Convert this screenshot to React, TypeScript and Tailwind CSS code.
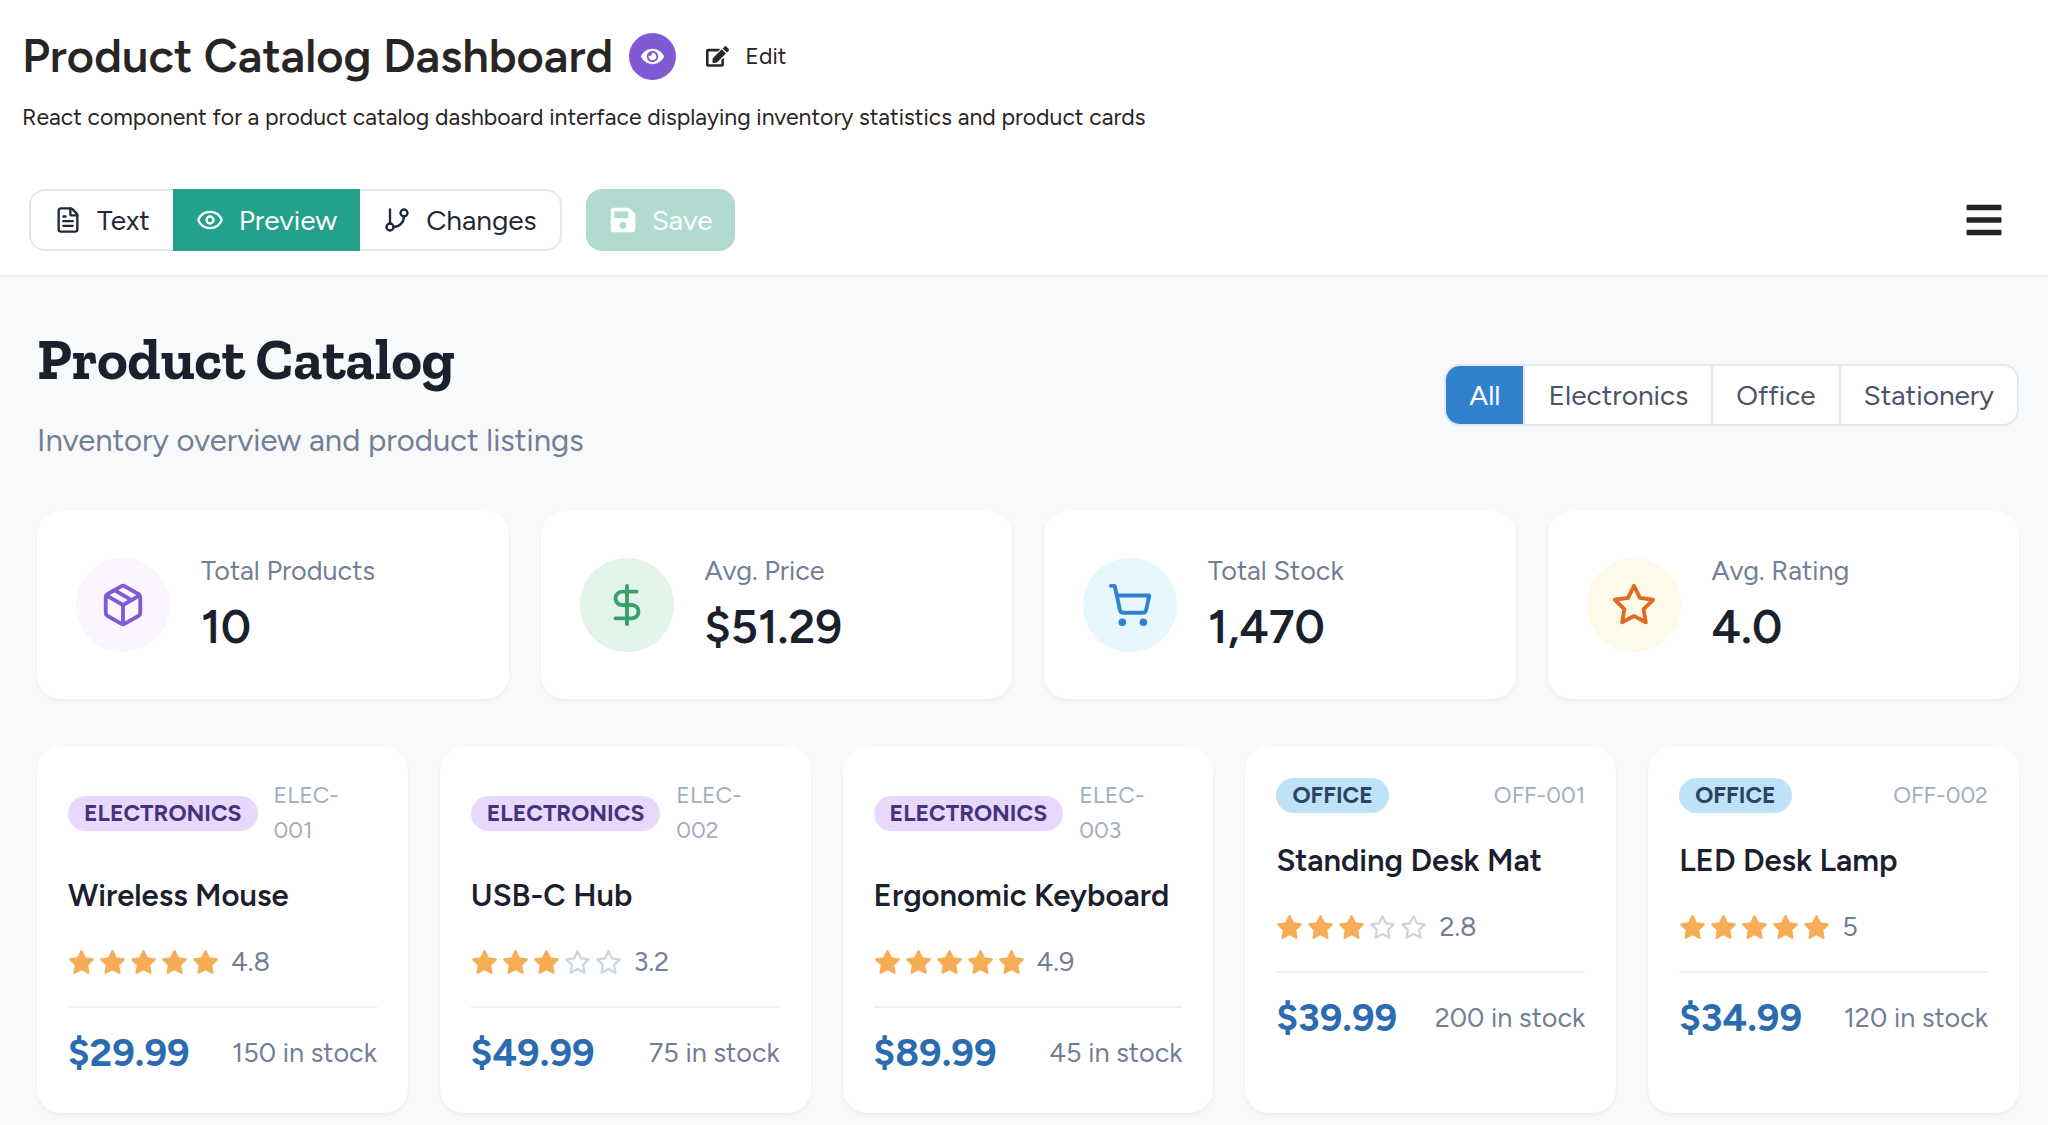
import { useState } from 'react'
import { Package, DollarSign, ShoppingCart, Eye, FileText, GitBranch } from 'lucide-react'
import { FaEye, FaEdit, FaSave, FaBars } from 'react-icons/fa'
import { FiStar } from 'react-icons/fi'
import { clsx } from 'clsx'

const stats = [
  { label: 'Total Products', value: '10', icon: Package, tone: 'bg-[#faf5ff] text-[#805ad5]' },
  { label: 'Avg. Price', value: '$51.29', icon: DollarSign, tone: 'bg-[#e3f4eb] text-[#38a169]' },
  { label: 'Total Stock', value: '1,470', icon: ShoppingCart, tone: 'bg-[#e6f7fe] text-[#3182ce]' },
  { label: 'Avg. Rating', value: '4.0', icon: FiStar, tone: 'bg-[#fdfaea] text-[#dd6b20]' },
]

const products = [
  { sku: 'ELEC-001', name: 'Wireless Mouse', category: 'Electronics', rating: 4.8, price: '$29.99', stock: 150 },
  { sku: 'ELEC-002', name: 'USB-C Hub', category: 'Electronics', rating: 3.2, price: '$49.99', stock: 75 },
  { sku: 'ELEC-003', name: 'Ergonomic Keyboard', category: 'Electronics', rating: 4.9, price: '$89.99', stock: 45 },
  { sku: 'OFF-001', name: 'Standing Desk Mat', category: 'Office', rating: 2.8, price: '$39.99', stock: 200 },
  { sku: 'OFF-002', name: 'LED Desk Lamp', category: 'Office', rating: 5, price: '$34.99', stock: 120 },
]

const filters = ['All', 'Electronics', 'Office', 'Stationery']

function Header() {
  return (
    <header className="border-b-2 border-[#ebebeb] bg-white px-[22px] pt-8 pb-6 text-[#292524]">
      <div className="flex h-12 items-center">
        <h1 className="text-[47px] leading-12 font-semibold">Product Catalog Dashboard</h1>
        <span className="ml-4 flex size-[47px] items-center justify-center rounded-full bg-[#805ad5] text-white">
          <FaEye size={23} />
        </span>
        <button className="ml-[30px] flex items-center gap-4 text-[23px]">
          <FaEdit size={23} />
          Edit
        </button>
      </div>
      <p className="mt-[21px] text-[23px] leading-8">
        React component for a product catalog dashboard interface displaying inventory statistics and product cards
      </p>
      <div className="mt-14 flex h-[62px] items-center justify-between pr-[22px] pl-[7px]">
        <div className="flex h-full items-center gap-6 text-[28px] text-[#1f2937]">
          <div className="flex h-full rounded-2xl border-2 border-[#e2e8f0]">
            <button className="flex items-center gap-[15px] px-[23px]">
              <FileText size={28} />
              Text
            </button>
            <button className="-my-0.5 flex items-center gap-[15px] bg-[#24a18a] px-[23px] text-white">
              <Eye size={28} />
              Preview
            </button>
            <button className="flex items-center gap-[15px] px-[23px]">
              <GitBranch size={28} />
              Changes
            </button>
          </div>
          <button
            className="flex h-full items-center gap-[15px] rounded-2xl bg-[#b1dbd1] px-[23px] text-[28px] text-white"
            disabled
          >
            <FaSave size={28} />
            Save
          </button>
        </div>
        <button aria-label="Menu">
          <FaBars size={40} />
        </button>
      </div>
    </header>
  )
}

function Rating({ value }: { value: number }) {
  return (
    <div className="mt-[25px] flex h-9 items-center gap-1 text-[27px] text-[#718096]">
      {[1, 2, 3, 4, 5].map((n) => (
        <FiStar
          key={n}
          size={27}
          className={n <= Math.round(value) ? 'fill-[#f6ad55] text-[#f6ad55]' : 'text-[#cbd5e0]'}
        />
      ))}
      <span className="ml-2">{value}</span>
    </div>
  )
}

function ProductCard({ product }: { product: (typeof products)[number] }) {
  return (
    <article className="rounded-3xl bg-white p-[31px] shadow-[0_2px_4px_rgba(0,0,0,0.05)]">
      <div className="flex items-center justify-between gap-4">
        <span
          className={clsx(
            'rounded-full px-4 text-[23px] leading-[35px] font-bold uppercase',
            product.category === 'Office' ? 'bg-[#bee3f8] text-[#2a4365]' : 'bg-[#e9d8fd] text-[#44337a]'
          )}
        >
          {product.category}
        </span>
        <span className="text-[23px] leading-[35px] text-[#a0aec0]">{product.sku}</span>
      </div>
      <h3 className="mt-[25px] text-[31px] leading-[46px] font-semibold text-[#1a202c]">{product.name}</h3>
      <Rating value={product.rating} />
      <div className="mt-[26px] flex items-center justify-between border-t-2 border-[#edf2f7] pt-4">
        <span className="text-[39px] leading-[58px] font-bold text-[#2b6cb0]">{product.price}</span>
        <span className="text-[27px] text-[#718096]">{product.stock} in stock</span>
      </div>
    </article>
  )
}

export default function App() {
  const [filter, setFilter] = useState('All')
  const shown = products.filter((p) => filter === 'All' || p.category === filter)

  return (
    <div className="flex min-h-screen flex-col bg-white font-['Figtree','Lato',sans-serif]">
      <Header />
      <main className="flex-1 bg-[#f7f9fb] pt-[47px] pr-[29px] pb-2 pl-[37px]">
        <div className="flex items-center justify-between">
          <div>
            <h2 className="font-['Zilla_Slab','DejaVu_Serif',serif] text-[58px] leading-[70px] font-bold text-[#1a202c]">
              Product Catalog
            </h2>
            <p className="mt-[23px] text-[31px] leading-12 text-[#718096]">Inventory overview and product listings</p>
          </div>
          <div className="flex h-[62px] overflow-hidden rounded-2xl border-2 border-[#e2e8f0] bg-white">
            {filters.map((name) => (
              <button
                key={name}
                onClick={() => setFilter(name)}
                className={clsx(
                  'border-l-2 border-[#e2e8f0] px-[23px] text-[28px] first:border-l-0',
                  name === filter ? 'bg-[#3182ce] text-white' : 'text-[#4a5568]'
                )}
              >
                {name}
              </button>
            ))}
          </div>
        </div>

        <section className="mt-[46px] grid grid-cols-4 gap-8">
          {stats.map(({ label, value, icon: Icon, tone }) => (
            <div
              key={label}
              className="flex items-center gap-[31px] rounded-3xl bg-white px-[39px] py-10 shadow-[0_2px_4px_rgba(0,0,0,0.05)]"
            >
              <div className={clsx('flex size-[94px] items-center justify-center rounded-full', tone)}>
                <Icon size={46} />
              </div>
              <div>
                <div className="text-[27px] leading-10 text-[#718096]">{label}</div>
                <div className="mt-1 text-[47px] leading-16 font-semibold text-[#1a202c]">{value}</div>
              </div>
            </div>
          ))}
        </section>

        <section className="mt-12 grid grid-cols-5 gap-8">
          {shown.map((product) => (
            <ProductCard key={product.sku} product={product} />
          ))}
        </section>
      </main>
    </div>
  )
}
